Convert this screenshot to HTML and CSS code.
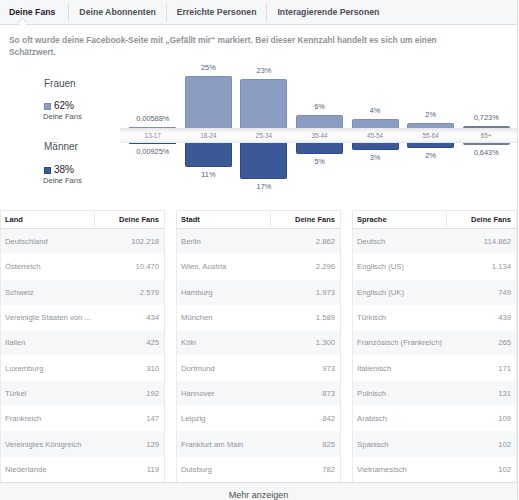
FILE: index.html
```html
<!DOCTYPE html>
<html lang="de">
<head>
<meta charset="utf-8">
<title>Deine Fans</title>
<link rel="stylesheet" href="styles.css">
</head>
<body>
<div class="page">
  <div class="tabs">
    <div class="tab active">Deine Fans</div>
    <div class="tab">Deine Abonnenten</div>
    <div class="tab">Erreichte Personen</div>
    <div class="tab">Interagierende Personen</div>
  </div>

  <p class="desc">So oft wurde deine Facebook-Seite mit „Gefällt mir“ markiert. Bei dieser Kennzahl handelt es sich um einen<br>Schätzwert.</p>

  <div class="demo">
    <div class="legend">
      <div class="sex">Frauen</div>
      <div class="pct"><span class="sq sq-f"></span>62%</div>
      <div class="sub">Deine Fans</div>
      <div class="sex sex-m">Männer</div>
      <div class="pct pct-m"><span class="sq sq-m"></span>38%</div>
      <div class="sub">Deine Fans</div>
    </div>
    <div class="chart">
      <div class="row row-top">
        <div class="col"><span class="val">0,00588%</span><span class="bar bar-f" style="height:0px"></span></div>
        <div class="col"><span class="val">25%</span><span class="bar bar-f" style="height:52px"></span></div>
        <div class="col"><span class="val">23%</span><span class="bar bar-f" style="height:49px"></span></div>
        <div class="col"><span class="val">6%</span><span class="bar bar-f" style="height:13px"></span></div>
        <div class="col"><span class="val">4%</span><span class="bar bar-f" style="height:9px"></span></div>
        <div class="col"><span class="val">2%</span><span class="bar bar-f" style="height:5px"></span></div>
        <div class="col"><span class="val">0,723%</span><span class="bar bar-f bar-thin" style="height:2px"></span></div>
      </div>
      <div class="row band">
        <span>13-17</span><span>18-24</span><span>25-34</span><span>35-44</span><span>45-54</span><span>55-64</span><span>65+</span>
      </div>
      <div class="row row-bottom">
        <div class="col"><span class="bar bar-m" style="height:0px"></span><span class="val">0,00925%</span></div>
        <div class="col"><span class="bar bar-m" style="height:24px"></span><span class="val">11%</span></div>
        <div class="col"><span class="bar bar-m" style="height:36px"></span><span class="val">17%</span></div>
        <div class="col"><span class="bar bar-m" style="height:11px"></span><span class="val">5%</span></div>
        <div class="col"><span class="bar bar-m" style="height:7px"></span><span class="val">3%</span></div>
        <div class="col"><span class="bar bar-m" style="height:5px"></span><span class="val">2%</span></div>
        <div class="col"><span class="bar bar-m bar-thin" style="height:2px"></span><span class="val">0,643%</span></div>
      </div>
    </div>
  </div>

  <div class="tables">
    <div class="tbl">
      <div class="th"><span>Land</span><span>Deine Fans</span></div>
      <div class="tr"><span>Deutschland</span><span>102.218</span></div>
      <div class="tr"><span>Österreich</span><span>10.470</span></div>
      <div class="tr"><span>Schweiz</span><span>2.579</span></div>
      <div class="tr"><span>Vereinigte Staaten von ...</span><span>434</span></div>
      <div class="tr"><span>Italien</span><span>425</span></div>
      <div class="tr"><span>Luxemburg</span><span>310</span></div>
      <div class="tr"><span>Türkei</span><span>192</span></div>
      <div class="tr"><span>Frankreich</span><span>147</span></div>
      <div class="tr"><span>Vereinigtes Königreich</span><span>129</span></div>
      <div class="tr"><span>Niederlande</span><span>119</span></div>
    </div>
    <div class="tbl">
      <div class="th"><span>Stadt</span><span>Deine Fans</span></div>
      <div class="tr"><span>Berlin</span><span>2.862</span></div>
      <div class="tr"><span>Wien, Austria</span><span>2.296</span></div>
      <div class="tr"><span>Hamburg</span><span>1.973</span></div>
      <div class="tr"><span>München</span><span>1.589</span></div>
      <div class="tr"><span>Köln</span><span>1.300</span></div>
      <div class="tr"><span>Dortmund</span><span>973</span></div>
      <div class="tr"><span>Hannover</span><span>873</span></div>
      <div class="tr"><span>Leipzig</span><span>842</span></div>
      <div class="tr"><span>Frankfurt am Main</span><span>825</span></div>
      <div class="tr"><span>Duisburg</span><span>782</span></div>
    </div>
    <div class="tbl">
      <div class="th"><span>Sprache</span><span>Deine Fans</span></div>
      <div class="tr"><span>Deutsch</span><span>114.862</span></div>
      <div class="tr"><span>Englisch (US)</span><span>1.134</span></div>
      <div class="tr"><span>Englisch (UK)</span><span>749</span></div>
      <div class="tr"><span>Türkisch</span><span>439</span></div>
      <div class="tr"><span>Französisch (Frankreich)</span><span>265</span></div>
      <div class="tr"><span>Italienisch</span><span>171</span></div>
      <div class="tr"><span>Polnisch</span><span>131</span></div>
      <div class="tr"><span>Arabisch</span><span>109</span></div>
      <div class="tr"><span>Spanisch</span><span>102</span></div>
      <div class="tr"><span>Vietnamesisch</span><span>102</span></div>
    </div>
  </div>

  <div class="more">Mehr anzeigen</div>
</div>
</body>
</html>
```

FILE: styles.css
```css
* { box-sizing: border-box; }

html, body {
  margin: 0;
  padding: 0;
  background: #fff;
}

body {
  font-family: "Liberation Sans", Arial, sans-serif;
  color: #1d2129;
}

.page {
  width: 518px;
  height: 500px;
  overflow: hidden;
  border-right: 1px solid #dddfe2;
}

/* Tabs */
.tabs {
  display: flex;
  align-items: center;
  height: 25px;
  background: #f6f7f9;
  border-bottom: 1px solid #dddfe2;
}

.tab {
  position: relative;
  padding: 0 10px;
  line-height: 19px;
  font-size: 8.7px;
  font-weight: bold;
  color: #4b4f56;
}

.tab:first-child {
  padding-left: 9px;
  padding-right: 13px;
}

.tab + .tab {
  border-left: 1px solid #dddfe2;
}

.tab.active {
  color: #1d2129;
}

.tab.active::after {
  content: "";
  position: absolute;
  left: 19px;
  bottom: -4px;
  width: 6px;
  height: 6px;
  background: #fff;
  border-left: 1px solid #dddfe2;
  border-top: 1px solid #dddfe2;
  transform: rotate(45deg);
}

/* Description */
.desc {
  margin: 0;
  padding: 9px 9px 0;
  font-size: 8.4px;
  line-height: 12px;
  font-weight: bold;
  color: #90949c;
  white-space: nowrap;
}

/* Demographics chart */
.demo {
  display: flex;
  margin-top: 2px;
}

.legend {
  width: 120px;
  flex: none;
  padding-left: 43px;
  padding-top: 18px;
}

.sex {
  font-size: 10px;
  line-height: 12px;
  color: #4b4f56;
  padding-left: 1px;
}

.sex-m {
  margin-top: 20px;
}

.pct {
  margin-top: 10px;
  font-size: 10px;
  line-height: 12px;
  color: #1d2129;
  display: flex;
  align-items: center;
}

.pct-m {
  margin-top: 11px;
}

.sq {
  width: 7px;
  height: 7px;
  margin-left: 1px;
  margin-right: 3px;
  display: inline-block;
}

.sq-f {
  background: #8b9dc3;
  border: 1px solid #7a8cb4;
}

.sq-m {
  background: #3b5998;
  border: 1px solid #2d4880;
}

.sub {
  font-size: 7.6px;
  line-height: 9px;
  color: #4b4f56;
}

.chart {
  flex: 1;
}

.row {
  display: grid;
  grid-template-columns: repeat(7, 1fr);
  padding: 0 3px 0 5px;
}

.row-top {
  height: 68px;
}

.row-bottom {
  height: 52px;
}

.col {
  display: flex;
  flex-direction: column;
  align-items: center;
}

.row-top .col {
  justify-content: flex-end;
}

.val {
  font-size: 7.4px;
  line-height: 10px;
  color: #52607e;
}

.row-top .val {
  margin-bottom: 3px;
}

.row-bottom .val {
  margin-top: 3px;
}

.bar {
  width: 47px;
  display: block;
}

.bar-f {
  background: #8b9dc3;
  border: 1px solid #7d8fb7;
  border-bottom: none;
  border-radius: 2px 2px 0 0;
}

.bar-m {
  background: #3b5998;
  border: 1px solid #304c86;
  border-top: none;
  border-radius: 0 0 2px 2px;
}

.bar-thin {
  border: none;
  background: #6f7c9c;
}

.band {
  height: 15px;
  align-items: center;
  background: linear-gradient(#e9ebee, #fbfbfc 35%, #fff 55%, #f1f2f4);
  border-top: 1px solid #e6e8eb;
  border-bottom: 1px solid #e6e8eb;
}

.band span {
  text-align: center;
  font-size: 6.3px;
  line-height: 13px;
  color: #7f858f;
}

/* Tables */
.tables {
  display: grid;
  grid-template-columns: repeat(3, 1fr);
  column-gap: 11px;
  margin-top: 15px;
}

.tbl {
  border: 1px solid #e9ebee;
  border-bottom: none;
}

.th,
.tr {
  display: grid;
  grid-template-columns: 1fr 69px;
  align-items: center;
}

.th {
  height: 18px;
  border-bottom: 1px solid #dddfe2;
  font-size: 7.5px;
  font-weight: bold;
  color: #1d2129;
}

.th span,
.tr span {
  padding: 0 5px 0 4px;
  white-space: nowrap;
  overflow: hidden;
}

.th span:first-child {
  border-right: 1px solid #e9ebee;
  line-height: 17px;
}

.th span:last-child,
.tr span:last-child {
  text-align: right;
}

.tr {
  height: 25.3px;
  font-size: 7.7px;
  color: #90949c;
}

.tr:nth-child(even) {
  background: #f6f7f9;
}

/* Footer */
.more {
  border-top: 1px solid #dddfe2;
  background: #f6f7f9;
  text-align: center;
  padding-top: 7px;
  font-size: 9px;
  line-height: 10px;
  color: #4b4f56;
  height: 40px;
}
```
